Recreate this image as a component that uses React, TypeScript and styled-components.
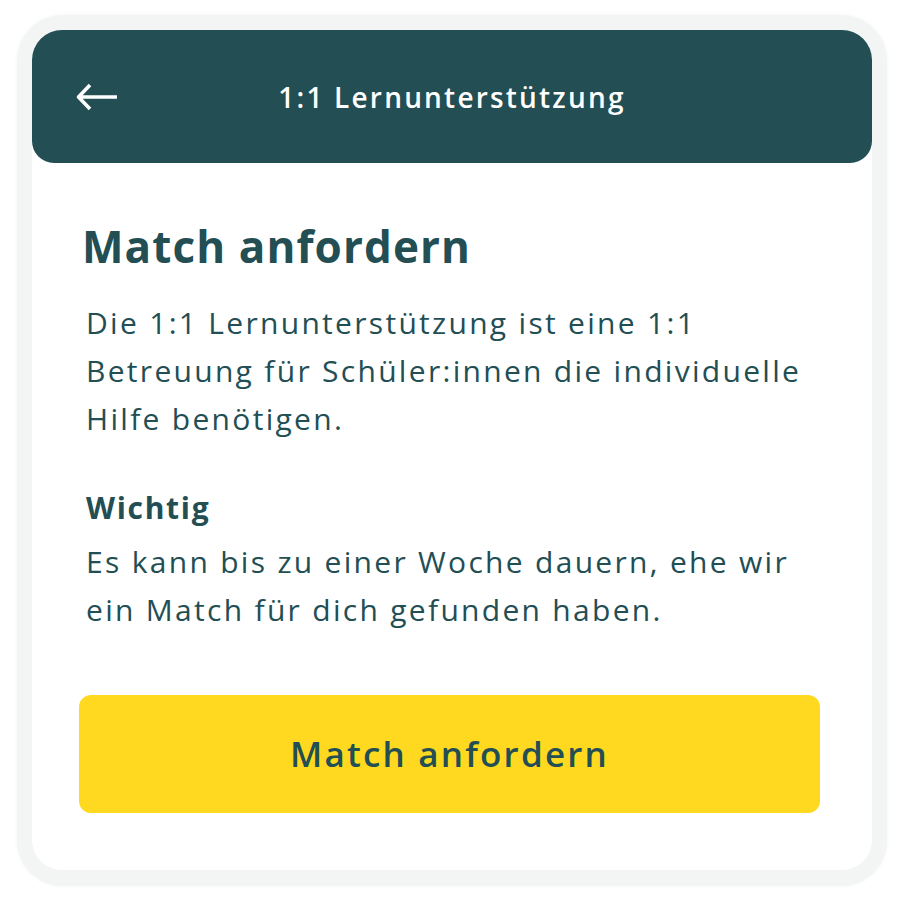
import styled, { createGlobalStyle } from 'styled-components';

const GlobalStyle = createGlobalStyle`
  html, body {
    margin: 0;
    padding: 0;
    background: #ffffff;
  }
  body {
    font-family: 'Open Sans', 'Liberation Sans', sans-serif;
    color: #224e54;
    padding-bottom: 13px;
  }
`;

const Frame = styled.div`
  width: 870px;
  margin: 15px 0 0 17px;
  padding: 15px 15px 16px 15px;
  box-sizing: border-box;
  border-radius: 46px;
  background: #f3f4f4;
  box-shadow: 0 0 3px 1px #f7f8f8;
`;

const Card = styled.main`
  height: 840px;
  background: #ffffff;
  border-radius: 30px;
  display: flex;
  flex-direction: column;
`;

const Header = styled.header`
  height: 133px;
  flex-shrink: 0;
  background: #224e54;
  border-radius: 30px 30px 22px 22px;
  display: grid;
  grid-template-columns: 120px 1fr 120px;
  align-items: center;
`;

const BackButton = styled.button`
  background: none;
  border: 0;
  padding: 0 0 0 44px;
  display: flex;
  align-items: center;
  cursor: pointer;
`;

const HeaderTitle = styled.h1`
  margin: 0;
  font-size: 28px;
  font-weight: 600;
  letter-spacing: 2.2px;
  color: #ffffff;
  text-align: center;
`;

const Content = styled.section`
  padding: 57px 52px 0 47px;
  display: flex;
  flex-direction: column;
`;

const Heading = styled.h2`
  margin: 0 0 26px 3px;
  font-size: 44px;
  font-weight: 700;
  letter-spacing: 1.1px;
  line-height: 52.8px;
`;

const Paragraph = styled.p`
  margin: 0 0 0 7px;
  font-size: 30px;
  font-weight: 400;
  letter-spacing: 2.3px;
  line-height: 48px;
`;

const SubHeading = styled.h3`
  margin: 41px 0 6px 7px;
  font-size: 30px;
  font-weight: 700;
  letter-spacing: 1.7px;
  line-height: 48px;
`;

const PrimaryButton = styled.button`
  margin-top: 61px;
  height: 118px;
  width: 741px;
  border: 0;
  border-radius: 12px;
  background: #fed91f;
  color: #224e54;
  font-family: 'Open Sans', 'Liberation Sans', sans-serif;
  font-size: 35px;
  font-weight: 600;
  letter-spacing: 2.2px;
  cursor: pointer;
`;

const ArrowIcon = () => (
  <svg width="42" height="28" viewBox="0 0 42 28" fill="none">
    <path d="M41 14H3M14 2L2.5 14L14 26" stroke="#ffffff" strokeWidth="3.6" strokeLinejoin="round" />
  </svg>
);

const App = () => {
  return (
    <>
      <GlobalStyle />
      <Frame>
        <Card>
          <Header>
            <BackButton aria-label="Zurück">
              <ArrowIcon />
            </BackButton>
            <HeaderTitle>1:1 Lernunterstützung</HeaderTitle>
            <div />
          </Header>
          <Content>
            <Heading>Match anfordern</Heading>
            <Paragraph>
              Die 1:1 Lernunterstützung ist eine 1:1
              <br />
              Betreuung für Schüler:innen die individuelle
              <br />
              Hilfe benötigen.
            </Paragraph>
            <SubHeading>Wichtig</SubHeading>
            <Paragraph>
              Es kann bis zu einer Woche dauern, ehe wir
              <br />
              ein Match für dich gefunden haben.
            </Paragraph>
            <PrimaryButton>Match anfordern</PrimaryButton>
          </Content>
        </Card>
      </Frame>
    </>
  );
};

export default App;
